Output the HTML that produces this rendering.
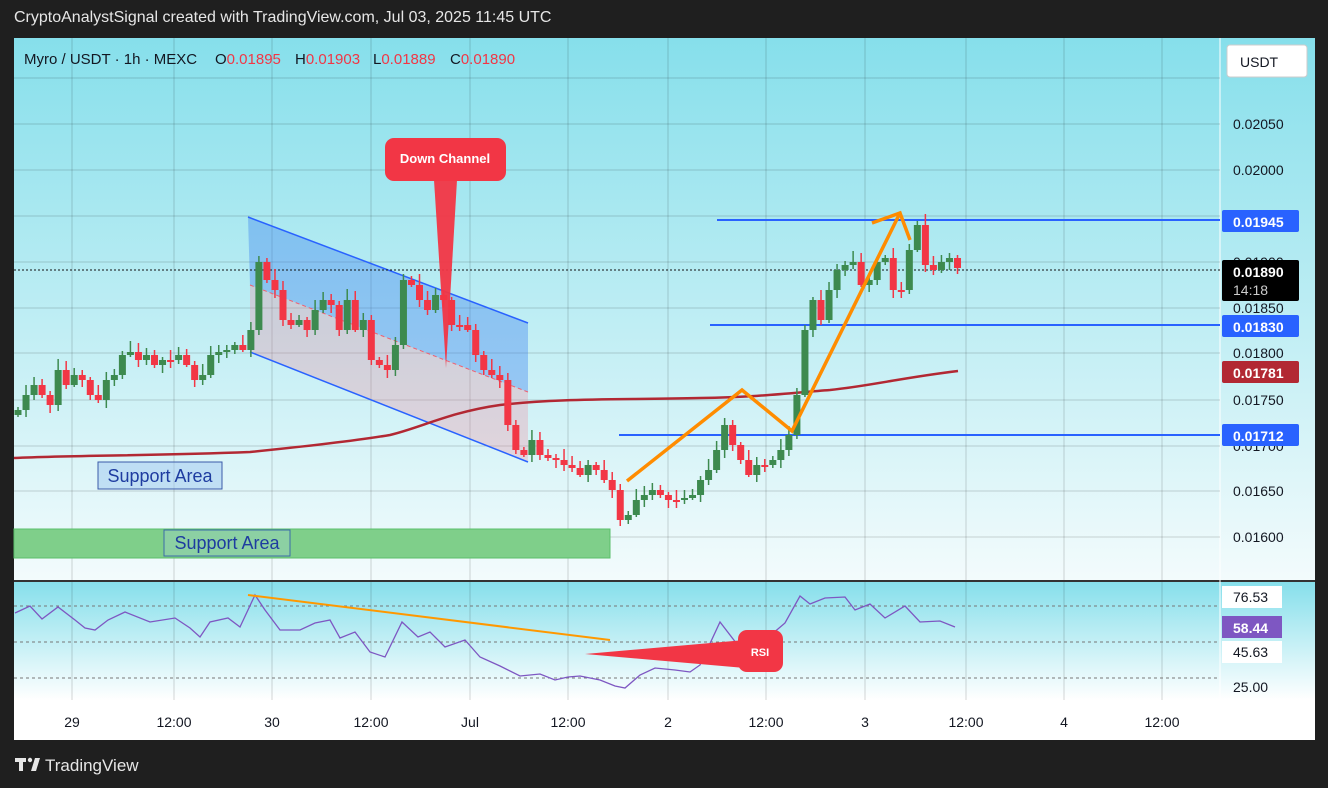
<!DOCTYPE html>
<html><head><meta charset="utf-8"><style>
html,body{margin:0;padding:0;background:#1f1f1f;width:1328px;height:788px;overflow:hidden;font-family:"Liberation Sans",sans-serif}
.t{position:absolute}
</style></head><body>
<div class="t" style="left:14px;top:9px;color:#e6e6e6;font-size:16px;">CryptoAnalystSignal created with TradingView.com, Jul 03, 2025 11:45 UTC</div>
<svg class="t" style="left:0;top:0" width="1328" height="788" xmlns="http://www.w3.org/2000/svg" font-family="Liberation Sans, sans-serif">
<defs>
<linearGradient id="bg" x1="0" y1="0" x2="0" y2="1"><stop offset="0" stop-color="#86dfeb"/><stop offset="1" stop-color="#f3fbfc"/></linearGradient>
<linearGradient id="bg2" x1="0" y1="0" x2="0" y2="1"><stop offset="0" stop-color="#86dfeb"/><stop offset="1" stop-color="#ffffff"/></linearGradient>
</defs>
<rect x="14" y="38" width="1301" height="542" fill="url(#bg)"/>
<rect x="14" y="582" width="1301" height="118" fill="url(#bg2)"/>
<rect x="14" y="700" width="1301" height="40" fill="#fff"/>
<rect x="14" y="580" width="1301" height="2" fill="#333"/>
<rect x="1315" y="38" width="13" height="702" fill="#1f1f1f"/>
<line x1="1220" y1="38" x2="1220" y2="700" stroke="#fff" stroke-width="1"/>
<g stroke="rgba(0,0,0,0.16)" stroke-width="1" id="grid"></g>
<rect x="14" y="529" width="596" height="29" fill="#7fcf8a" stroke="#5bbf6b"/>
<rect x="98" y="462" width="124" height="27" fill="rgba(160,200,240,0.5)" stroke="#3b5ba9"/>
<text x="160" y="482" font-size="18" fill="#1e3ca0" text-anchor="middle">Support Area</text>
<rect x="164" y="530" width="126" height="26" fill="rgba(160,210,200,0.4)" stroke="#3b6ba9"/>
<text x="227" y="549" font-size="18" fill="#1e3ca0" text-anchor="middle">Support Area</text>
<polygon points="248,217 528,323 528,392 250,285" fill="rgba(60,130,240,0.38)"/>
<polygon points="250,285 528,392 528,462 250,352" fill="rgba(240,130,150,0.28)"/>
<line x1="248" y1="217" x2="528" y2="323" stroke="#2962ff" stroke-width="1.5"/>
<line x1="250" y1="352" x2="528" y2="462" stroke="#2962ff" stroke-width="1.5"/>
<line x1="250" y1="285" x2="528" y2="392" stroke="#f06070" stroke-width="1" stroke-dasharray="4,3"/>
<path d="M14,458 C80,455 150,456 250,452 C320,445 360,440 390,435 C420,428 450,412 500,405 C560,398 620,400 700,398 C760,397 790,393 830,390 C870,386 900,378 958,371" fill="none" stroke="#b22833" stroke-width="2.5"/>
<line x1="717" y1="220" x2="1220" y2="220" stroke="#2962ff" stroke-width="2"/>
<line x1="710" y1="325" x2="1220" y2="325" stroke="#2962ff" stroke-width="2"/>
<line x1="619" y1="435" x2="1220" y2="435" stroke="#2962ff" stroke-width="2"/>
<line x1="14" y1="270" x2="1220" y2="270" stroke="#111" stroke-width="1" stroke-dasharray="2,2"/>
<g id="candles"></g>
<polyline points="627,481 742,390 792,431 900,213" fill="none" stroke="#ff8c00" stroke-width="3.5" stroke-linejoin="miter"/>
<polyline points="872,223 900,213 910,240" fill="none" stroke="#ff8c00" stroke-width="3.5"/>
<rect x="385" y="138" width="121" height="43" rx="9" fill="#f23645"/>
<polygon points="434,180 457,180 446,368" fill="#f23645" opacity="0.95"/>
<text x="445" y="163" font-size="13" font-weight="bold" fill="#fff" text-anchor="middle">Down Channel</text>
<rect x="1227" y="45" width="80" height="32" rx="3" fill="#fff" stroke="#ccc"/>
<text x="1240" y="67" font-size="14" fill="#131722">USDT</text>
<g font-size="14" fill="#131722">
<text x="1233" y="129">0.02050</text><text x="1233" y="175">0.02000</text>
<text x="1233" y="267">0.01900</text><text x="1233" y="313">0.01850</text>
<text x="1233" y="358">0.01800</text><text x="1233" y="405">0.01750</text>
<text x="1233" y="451">0.01700</text><text x="1233" y="496">0.01650</text><text x="1233" y="542">0.01600</text>
</g>
<rect x="1222" y="210" width="77" height="22" rx="2" fill="#2962ff"/><text x="1233" y="227" font-size="14" font-weight="bold" fill="#fff">0.01945</text>
<rect x="1222" y="260" width="77" height="41" rx="2" fill="#000"/><text x="1233" y="277" font-size="14" font-weight="bold" fill="#fff">0.01890</text><text x="1233" y="295" font-size="14" fill="#ccc">14:18</text>
<rect x="1222" y="315" width="77" height="22" rx="2" fill="#2962ff"/><text x="1233" y="332" font-size="14" font-weight="bold" fill="#fff">0.01830</text>
<rect x="1222" y="361" width="77" height="22" rx="2" fill="#b22833"/><text x="1233" y="378" font-size="14" font-weight="bold" fill="#fff">0.01781</text>
<rect x="1222" y="424" width="77" height="22" rx="2" fill="#2962ff"/><text x="1233" y="441" font-size="14" font-weight="bold" fill="#fff">0.01712</text>
<line x1="14" y1="606" x2="1220" y2="606" stroke="#777" stroke-dasharray="3,3"/>
<line x1="14" y1="642" x2="1220" y2="642" stroke="#777" stroke-dasharray="3,3"/>
<line x1="14" y1="678" x2="1220" y2="678" stroke="#777" stroke-dasharray="3,3"/>
<polyline fill="none" stroke="#7e57c2" stroke-width="1.3" points="15,613 30,606 42,619 58,607 75,620 85,628 95,630 108,620 125,612 150,622 175,618 190,628 200,637 210,622 228,618 240,627 255,595 265,610 280,630 300,630 315,623 330,620 340,638 355,632 370,652 385,657 402,622 418,637 430,632 445,647 465,640 480,657 500,666 520,676 540,674 555,680 568,677 580,676 600,680 615,686 625,688 640,675 655,668 675,670 690,672 700,665 720,622 740,648 765,640 785,623 800,596 810,604 825,598 845,597 855,610 870,604 885,618 905,606 920,622 940,621 955,627"/>
<line x1="248" y1="595" x2="610" y2="640" stroke="#ff9800" stroke-width="2"/>
<polygon points="585,654 745,640 745,668" fill="#f23645"/>
<rect x="738" y="630" width="45" height="42" rx="9" fill="#f23645"/>
<text x="760" y="656" font-size="11" font-weight="bold" fill="#fff" text-anchor="middle">RSI</text>
<rect x="1222" y="586" width="60" height="22" fill="#fff"/><text x="1233" y="602" font-size="14" fill="#131722">76.53</text>
<rect x="1222" y="616" width="60" height="22" fill="#7e57c2"/><text x="1233" y="633" font-size="14" font-weight="bold" fill="#fff">58.44</text>
<rect x="1222" y="641" width="60" height="22" fill="#fff"/><text x="1233" y="657" font-size="14" fill="#131722">45.63</text>
<text x="1233" y="692" font-size="14" fill="#131722">25.00</text>
<g font-size="14" fill="#131722" text-anchor="middle">
<text x="72" y="727">29</text><text x="174" y="727">12:00</text><text x="272" y="727">30</text><text x="371" y="727">12:00</text>
<text x="470" y="727">Jul</text><text x="568" y="727">12:00</text><text x="668" y="727">2</text><text x="766" y="727">12:00</text>
<text x="865" y="727">3</text><text x="966" y="727">12:00</text><text x="1064" y="727">4</text><text x="1162" y="727">12:00</text>
</g>
<g font-size="15" fill="#131722">
<text x="24" y="64">Myro / USDT · 1h · MEXC</text>
<text x="215" y="64">O<tspan fill="#f23645">0.01895</tspan></text>
<text x="295" y="64">H<tspan fill="#f23645">0.01903</tspan></text>
<text x="373" y="64">L<tspan fill="#f23645">0.01889</tspan></text>
<text x="450" y="64">C<tspan fill="#f23645">0.01890</tspan></text>
</g>
<g fill="#e6e6e6"><rect x="15" y="758" width="11" height="4"/><rect x="19" y="758" width="4" height="13"/><circle cx="30" cy="760" r="2.2"/><polygon points="31,771 35,758 40,758 36,771"/></g>
<text x="45" y="771" font-size="17" fill="#e6e6e6">TradingView</text>
</svg>
<script>
(function(){
var ns="http://www.w3.org/2000/svg";
var g=document.getElementById('grid');
[72,174,272,371,470,568,668,766,865,966,1064,1162].forEach(function(x){
 [[38,580],[582,700]].forEach(function(r){var l=document.createElementNS(ns,'line');l.setAttribute('x1',x);l.setAttribute('x2',x);l.setAttribute('y1',r[0]);l.setAttribute('y2',r[1]);g.appendChild(l);});
});
[78,124,170,216,262,308,353,400,446,491,537].forEach(function(y){var l=document.createElementNS(ns,'line');l.setAttribute('x1',14);l.setAttribute('x2',1220);l.setAttribute('y1',y);l.setAttribute('y2',y);g.appendChild(l);});
var c=[410,395,385,395,405,370,385,375,380,395,400,380,375,355,352,360,355,365,360,360,355,365,380,375,355,352,350,345,350,330,262,280,290,320,325,320,330,310,300,305,330,300,330,320,360,365,370,345,280,285,300,310,295,300,325,325,330,355,370,375,380,425,450,455,440,455,458,460,465,468,475,465,470,480,490,520,515,500,495,490,495,500,500,498,495,480,470,450,425,445,460,475,465,465,460,450,435,395,330,300,320,290,270,265,262,285,280,262,258,290,290,250,225,265,270,262,258,268];
var cg=document.getElementById('candles');var prev=415;
for(var i=0;i<c.length;i++){var x=18+i*8.03;var o=prev,cl=c[i];var up=cl<o;
 var tp=Math.min(o,cl),bt=Math.max(o,cl);if(bt-tp<2){bt=tp+2;}
 var col=up?'#3d8a4f':'#f23645';
 var w=document.createElementNS(ns,'line');w.setAttribute('x1',x);w.setAttribute('x2',x);w.setAttribute('y1',tp-3-(i*7%9));w.setAttribute('y2',bt+2+(i*5%7));w.setAttribute('stroke',col);w.setAttribute('stroke-width',1.5);cg.appendChild(w);
 var r=document.createElementNS(ns,'rect');r.setAttribute('x',x-3.5);r.setAttribute('y',tp);r.setAttribute('width',7);r.setAttribute('height',bt-tp);r.setAttribute('fill',col);cg.appendChild(r);
 prev=cl;}
})();
</script>
</body></html>
